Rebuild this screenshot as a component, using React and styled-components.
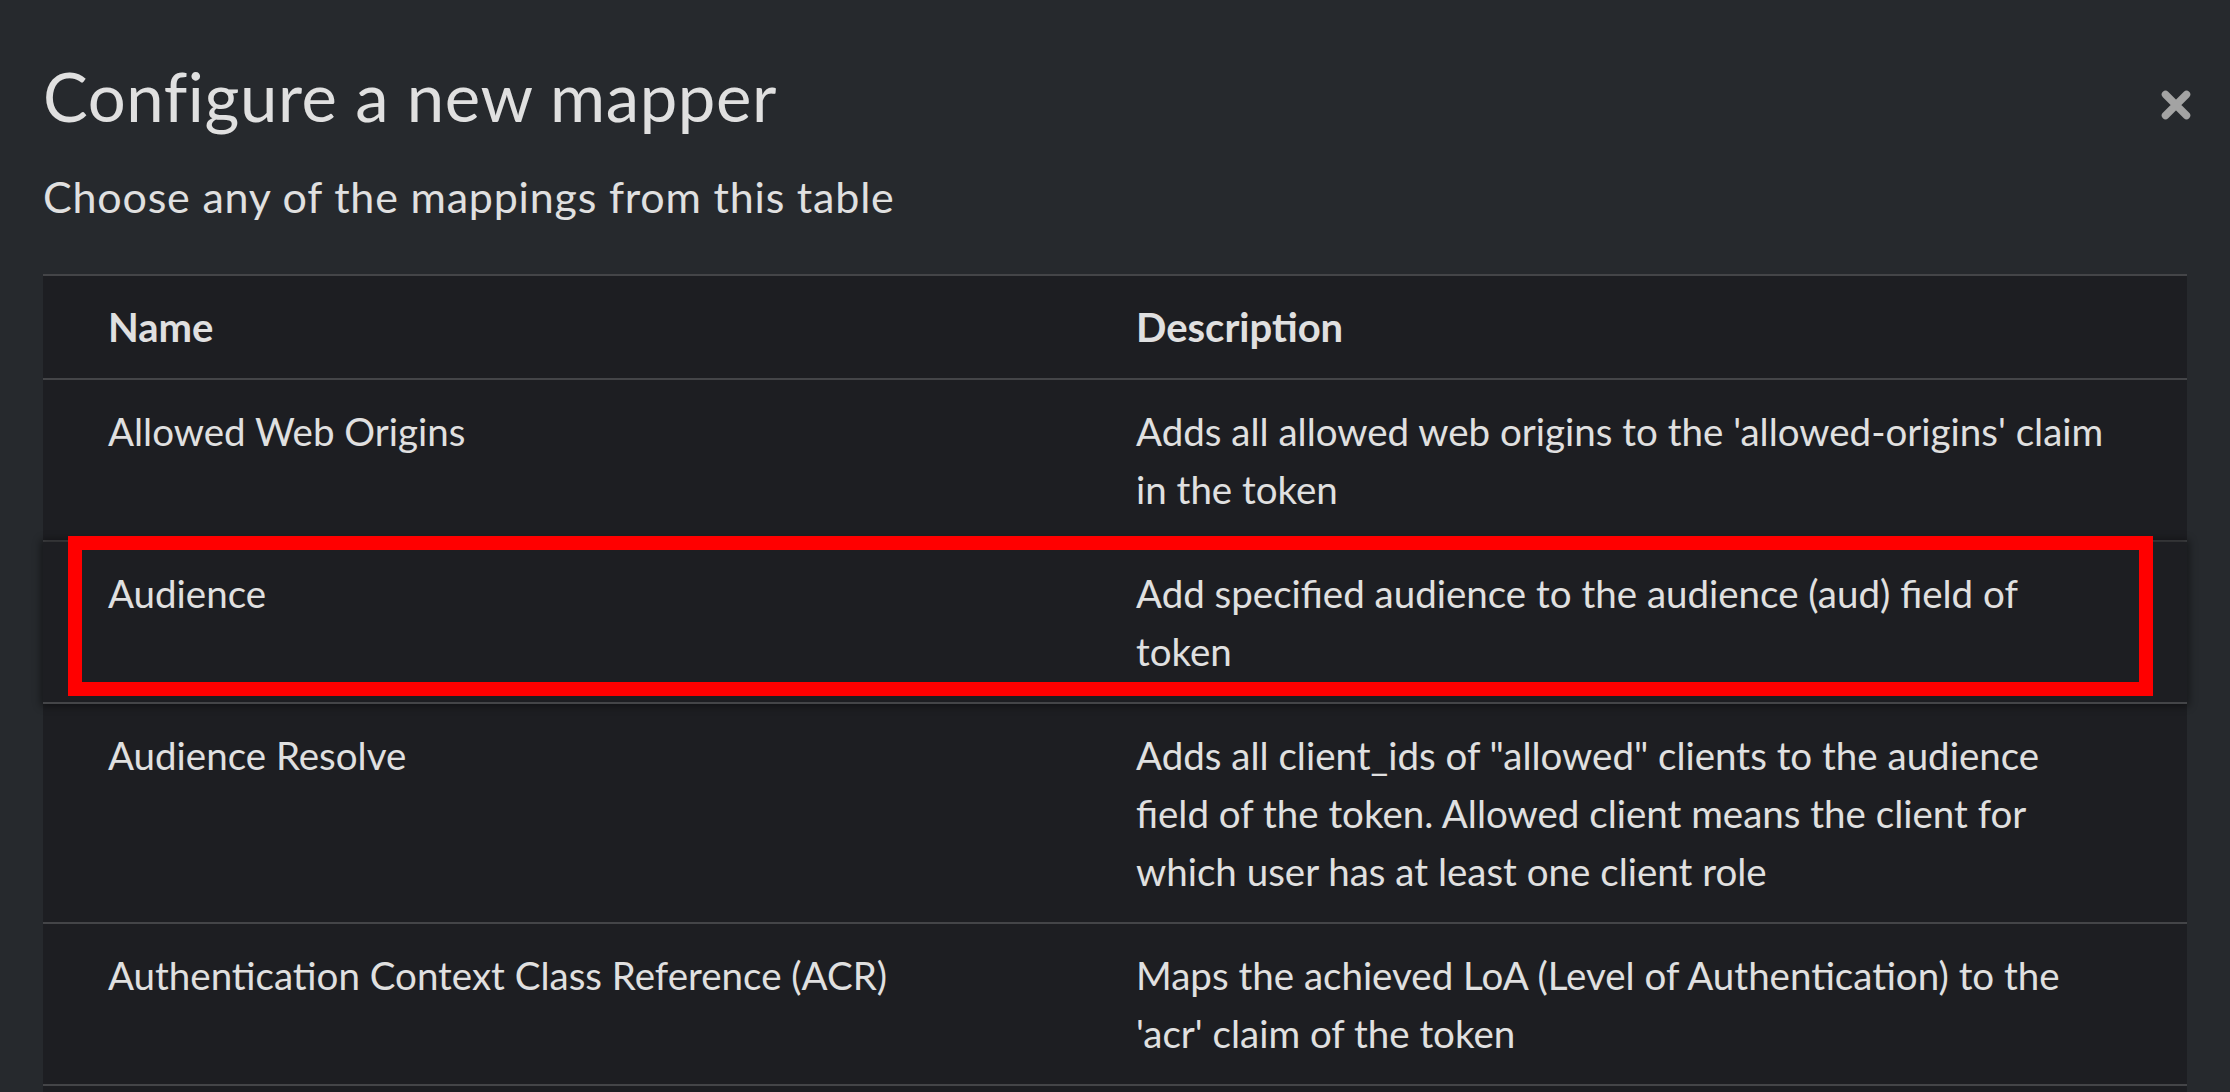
import styled, { createGlobalStyle } from 'styled-components';

const GlobalStyle = createGlobalStyle`
  html, body {
    margin: 0;
    padding: 0;
    background: #26292d;
    overflow: hidden;
  }
  body {
    font-family: Lato, "Liberation Sans", sans-serif;
    color: #e0e0e0;
  }
`;

const mappers = [
    { name: 'Allowed Web Origins', description: "Adds all allowed web origins to the 'allowed-origins' claim in the token" },
    { name: 'Audience', description: 'Add specified audience to the audience (aud) field of token', selected: true },
    { name: 'Audience Resolve', description: 'Adds all client_ids of "allowed" clients to the audience field of the token. Allowed client means the client for which user has at least one client role' },
    { name: 'Authentication Context Class Reference (ACR)', description: "Maps the achieved LoA (Level of Authentication) to the 'acr' claim of the token" },
];

const CloseIcon = () => (
    <svg width="30" height="30" viewBox="0 0 30 30">
        <path d="M4.5 4.5 L25.5 25.5 M25.5 4.5 L4.5 25.5" stroke="currentColor" strokeWidth="7.5" strokeLinecap="round" fill="none"/>
    </svg>
);

const App = () => {
    return <Page>
        <GlobalStyle/>
        <Header>
            <TitleBlock>
                <Title>Configure a new mapper</Title>
                <Subtitle>Choose any of the mappings from this table</Subtitle>
            </TitleBlock>
            <CloseButton aria-label="Close"><CloseIcon/></CloseButton>
        </Header>
        <Table>
            <HeadRow>
                <Cell>Name</Cell>
                <Cell>Description</Cell>
            </HeadRow>
            {mappers.map(m => (
                <Row key={m.name} selected={m.selected}>
                    <Cell>{m.name}</Cell>
                    <Cell>{m.description}</Cell>
                    {m.selected && <Highlight/>}
                </Row>
            ))}
        </Table>
    </Page>
}

export default App;

const Page = styled.div`
    display: flex;
    flex-direction: column;
    padding: 57px 43px 0 43px;
    height: 1092px;
    box-sizing: border-box;
    overflow: hidden;
`

const Header = styled.div`
    display: flex;
    justify-content: space-between;
    align-items: flex-start;
    margin-right: -4px;
    margin-bottom: 46px;
`

const TitleBlock = styled.div`
    display: flex;
    flex-direction: column;
    gap: 29px;
`

const Title = styled.h1`
    margin: 0;
    font-size: 67px;
    line-height: 79px;
    font-weight: 400;
    letter-spacing: 0.6px;
    color: #e0e0e0;
`

const Subtitle = styled.p`
    margin: 0;
    font-size: 43px;
    line-height: 63px;
    font-weight: 400;
    letter-spacing: 0.8px;
    color: #e0e0e0;
`

const CloseButton = styled.button`
    margin-top: 33px;
    padding: 0;
    border: none;
    background: none;
    color: #a3a3a3;
    display: flex;
    cursor: pointer;
`

const Table = styled.div`
    flex: 1;
    background: #1d1e22;
    border-top: 2px solid #444548;
`

const Row = styled.div`
    position: relative;
    display: grid;
    grid-template-columns: 1093px 1fr;
    border-bottom: 2px solid #444548;
    font-size: 38.5px;
    line-height: 58px;
    font-weight: 400;
    background: #1d1e22;
    z-index: ${props => props.selected ? 1 : 0};
    box-shadow: ${props => props.selected ? '0 0 8px 2px rgba(0,0,0,0.45)' : 'none'};

    & > div:first-child {
        padding-left: 65px;
    }
    & > div:nth-child(2) {
        padding-right: 73px;
    }
`

const HeadRow = styled(Row)`
    font-size: 40px;
    font-weight: 700;
`

const Cell = styled.div`
    padding: 22px 0;
`

const Highlight = styled.div`
    position: absolute;
    left: 25px;
    top: -6px;
    width: 2085px;
    height: 160px;
    border: 14px solid #ff0000;
    box-sizing: border-box;
    pointer-events: none;
`
